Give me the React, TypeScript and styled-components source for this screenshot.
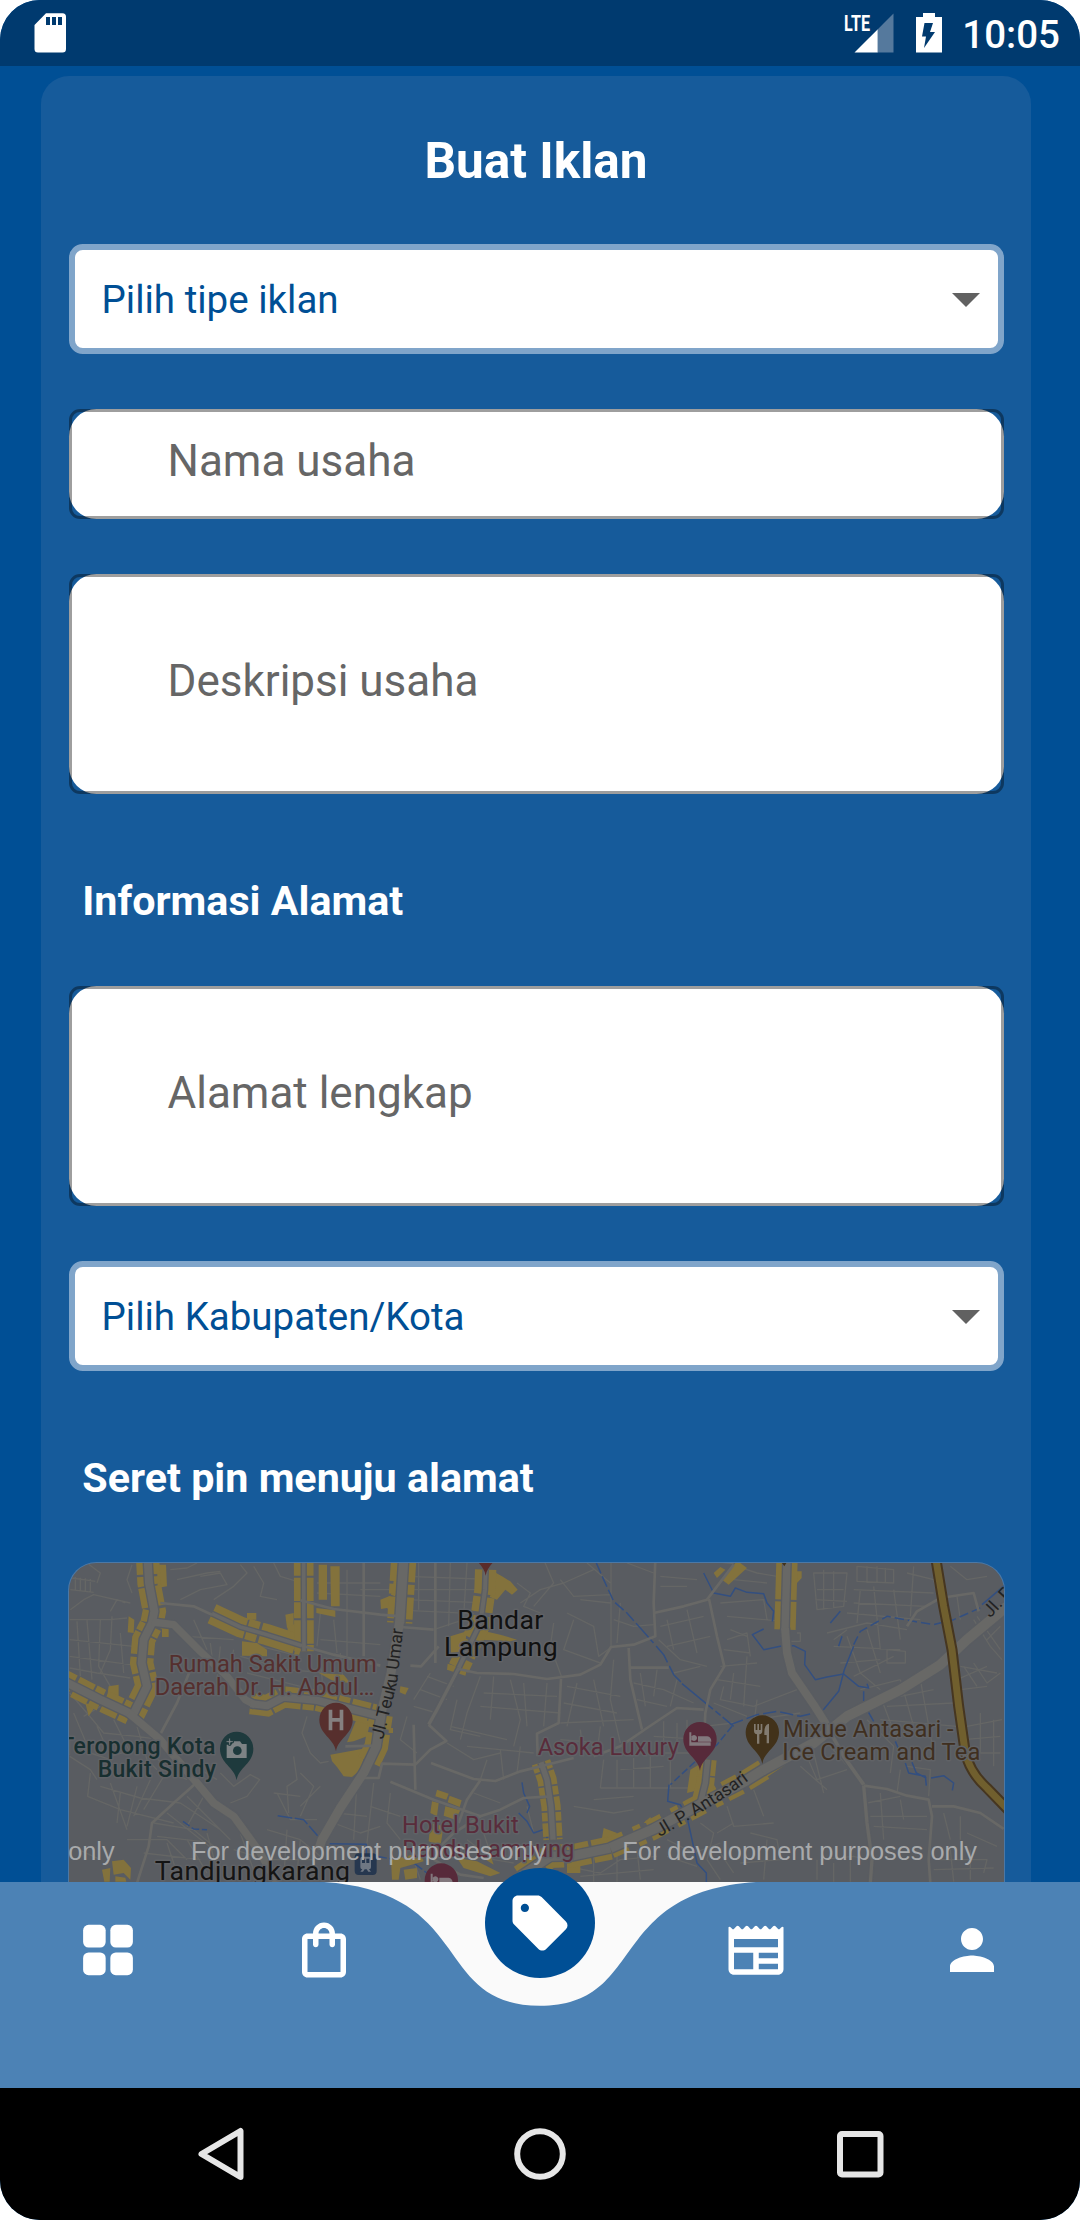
import React from 'react';
import styled, { createGlobalStyle } from 'styled-components';

const GlobalStyle = createGlobalStyle`
  *, *::before, *::after { box-sizing: border-box; }
  html, body { margin: 0; padding: 0; background: #fff; }
  body { font-family: Roboto, "Noto Sans", sans-serif; }
  svg { display: block; }
`;

const Phone = styled.div`
  display: flex;
  flex-direction: column;
  width: 1080px;
  height: 2220px;
  overflow: hidden;
  border-radius: 40px;
  background: #004f95;
`;

const StatusBar = styled.header`
  display: flex;
  flex: none;
  align-items: center;
  height: 66px;
  padding: 0 20px 0 34px;
  background: #003a6f;
  color: #fff;
`;

const StatusRight = styled.div`
  display: flex;
  align-items: center;
  margin-left: auto;
`;

const Clock = styled.time`
  margin-left: 19px;
  padding-top: 3px;
  font-size: 38.5px;
  line-height: 44px;
  font-weight: 500;
`;

const Lte = styled.text`
  font: 700 22px Roboto, sans-serif;
  fill: #fff;
`;

const Content = styled.main`
  flex: 1;
  min-height: 0;
  overflow: hidden;
  padding: 10px 49px 0 41px;
`;

const Card = styled.section`
  display: flex;
  flex-direction: column;
  padding: 0 27.5px;
  border-radius: 28px;
  background: #165b9b;
`;

const Title = styled.h1`
  margin: 0;
  height: 168px;
  line-height: 170px;
  text-align: center;
  font-size: 49.5px;
  font-weight: 700;
  color: #fff;
`;

const Fields = styled.div`
  display: flex;
  flex-direction: column;
  gap: 55px;
`;

const SelectBox = styled.div`
  display: flex;
  align-items: center;
  justify-content: space-between;
  height: 110px;
  padding: 0 18px 0 27px;
  border: 6px solid #80a5ca;
  border-radius: 13.75px;
  background: #fff;
  font-size: 38.5px;
  color: #004f95;
`;

const Caret = styled.span`
  margin-top: 2px;
  border: 14px solid transparent;
  border-top-color: #616161;
  border-bottom: 0;
`;

const TextField = styled.div<{ $tall?: boolean }>`
  position: relative;
  display: flex;
  align-items: center;
  height: ${(p) => (p.$tall ? 220 : 110)}px;
  padding: 0 99px 7px;
  border-radius: 27.5px;
  background: #fff;
  font-size: 44px;
  color: #666;

  &::after {
    content: '';
    position: absolute;
    inset: 0;
    border: 3px solid rgba(0, 0, 0, 0.38);
    border-radius: 11px;
  }
`;

const Heading = styled.h2`
  margin: 0;
  height: 192px;
  padding: 22px 13.75px 0;
  line-height: 171px;
  font-size: 41.25px;
  font-weight: 700;
  color: #fff;
`;

const MapFrame = styled.div`
  height: 420px;
  overflow: hidden;
  border-radius: 27.5px 27.5px 0 0;
  background: #595c61;
  box-shadow: 0 0 0 1px #4b78a6;
`;

const BottomBar = styled.nav`
  position: relative;
  flex: none;
  display: grid;
  grid-template-columns: repeat(5, 1fr);
  justify-items: center;
  height: 206px;
  padding-top: 35px;
  background: #4c82b5;
`;

const Notch = styled.svg`
  position: absolute;
  left: 0;
  top: 0;
`;

const NavIcon = styled.svg`
  width: 66px;
  height: 66px;
  fill: #fff;
`;

const ActiveTab = styled.div`
  position: absolute;
  left: 485px;
  top: -14px;
  display: flex;
  align-items: center;
  justify-content: center;
  width: 110px;
  height: 110px;
  border-radius: 50%;
  background: #004f95;
`;

const SystemBar = styled.footer`
  flex: none;
  display: flex;
  align-items: center;
  justify-content: center;
  gap: 254px;
  height: 132px;
  background: #000;
`;

const SystemIcon = styled.svg`
  width: 66px;
  height: 66px;
  fill: none;
  stroke: #e6e6e6;
  stroke-width: 6;
  stroke-linejoin: round;
`;

const Blocks = styled.path`
  fill: none;
  stroke: #83723c;
`;

const Casing = styled.path`
  fill: none;
  stroke: #595c61;
  stroke-linejoin: round;
`;

const Road = styled.path`
  fill: none;
  stroke: #686866;
  stroke-linejoin: round;
`;

const Lane = styled.path`
  fill: none;
  stroke: #656665;
  stroke-width: 4;
  stroke-linejoin: round;
`;

const River = styled.path`
  fill: none;
  stroke: #334f80;
  stroke-width: 4.5;
  stroke-linejoin: round;
`;

const MapLabel = styled.text<{ $size?: number; $weight?: number }>`
  font-family: Roboto, sans-serif;
  font-size: ${(p) => p.$size ?? 71}px;
  font-weight: ${(p) => p.$weight ?? 400};
  paint-order: stroke;
  stroke: #606266;
  stroke-width: 9px;
  stroke-linejoin: round;
`;

const StreetLabel = styled.text`
  font-family: Roboto, sans-serif;
  font-size: 53px;
  fill: #222;
`;

const Watermark = styled.text`
  font-family: "Liberation Sans", Arial, sans-serif;
  font-size: 76px;
  fill: #a8aaac;
`;

const Yellow = styled.path`
  fill: #83723c;
`;

type Avenue = { d: string; w: number; side?: number; dash?: string };

const avenues: Avenue[] = [
  { d: 'M442 60 L446 130 L462 215 L455 250 L430 300 L424 370 L440 440 L398 525', w: 24, side: 38, dash: '44 7 26 5 60 9' },
  { d: 'M190 424 L300 480 L390 522', w: 24, side: 36, dash: '30 9 52 6' },
  { d: 'M385 520 L480 600 L590 730 L640 790 L700 830 L780 940 L830 1030', w: 23 },
  { d: 'M455 247 L520 255 L600 335 L680 410 L735 480 L765 496', w: 22 },
  { d: 'M750 492 L800 498 L850 472 L950 482 L1140 530', w: 22, side: 34, dash: '56 6 34 8' },
  { d: 'M635 222 L720 262 L800 285 L905 318', w: 11, side: 44, dash: '110 5 34 8' },
  { d: 'M910 60 L911 335', w: 11, side: 40, dash: '48 6 70 4' },
  { d: 'M1210 60 L1198 250', w: 28, side: 40, dash: '66 8 30 8' },
  { d: 'M1198 245 L1172 400 L1140 530', w: 27 },
  { d: 'M1142 526 L1128 620 L1090 700', w: 27, side: 36, dash: '40 16 90 40' },
  { d: 'M1092 696 L1020 805 L965 900 L955 930', w: 27 },
  { d: 'M1456 90 L1454 150 L1440 250 L1375 385', w: 12, side: 44, dash: '74 8 46 12' },
  { d: 'M1375 385 L1310 510 L1285 555', w: 10 },
  { d: 'M1622 668 L1640 720 L1652 800 L1658 900', w: 16, side: 34, dash: '26 6 40 5' },
  { d: 'M1560 1010 L1650 950 L1720 948 L1830 925', w: 28, side: 34, dash: '70 9' },
  { d: 'M1830 925 L1960 868 L2080 805 L2240 722', w: 30, side: 26, dash: '50 34 24 20' },
  { d: 'M2235 724 L2290 690', w: 30, side: 26, dash: '100 4' },
  { d: 'M2285 693 L2440 610 L2540 530 L2700 450 L2820 375 L2900 300 L2990 225 L3020 200', w: 30 },
  { d: 'M2360 60 L2354 270', w: 22, side: 34, dash: '120 6' },
  { d: 'M2354 265 L2360 340 L2375 400 L2440 495 L2478 555', w: 24 },
  { d: 'M2478 555 L2530 650 L2590 735', w: 11 },
  { d: 'M2590 738 L2600 850 L2615 960 L2610 1030', w: 10 },
  { d: 'M2100 790 L2115 730 L2122 660', w: 16, side: 30, dash: '80 5' },
];

const middles = [
  'M1140 530 L1110 520', 'M1200 262 L1300 270', 'M1230 378 L1262 380 L1315 320',
  'M1375 388 L1430 400 L1540 403 L1640 418 L1740 405 L1800 375 L1832 322 L1900 315 L1965 290 L1960 190 L1965 60',
  'M1960 220 L2050 200 L2120 180 L2200 75', 'M2126 178 L2150 290 L2172 380 L2130 450 L2115 520 L2110 630',
  'M1682 418 L1675 550 L1610 582 L1612 650', 'M1885 325 L1890 420 L1925 570',
  'M1888 384 L2005 384', 'M1780 650 L1860 620 L1940 565 L2030 505 L2110 510',
  'M1080 715 L1135 715 L1145 672 L1245 675 L1290 630 L1338 604 L1285 555', 'M1292 670 L1420 718 L1485 724 L1560 695 L1720 655',
  'M1170 726 L1300 780 L1440 830 L1500 810 L1570 775 L1650 770', 'M1440 722 L1400 780 L1375 850',
  'M480 190 L580 200 L635 225', 'M900 182 L1000 208 L1140 225 L1200 230', 'M905 318 L1000 345 L1140 378',
  'M570 390 L530 490 L482 580', 'M590 728 L520 790 L455 850 L445 920 L410 1030',
  'M1035 620 L1130 618', 'M1240 555 L1245 750', 'M2590 738 L2660 748 L2720 768 L2785 780 L2795 830 L2785 960 L2790 1030',
  'M2795 800 L2860 800 L2940 820 L3010 868', 'M2720 260 L2750 215 L2820 175 L2920 160 L2935 215',
  'M1090 60 L1090 350', 'M1305 60 L1305 370', 'M1440 830 L1360 880 L1280 960', 'M1300 960 L1380 1005 L1450 1015', 'M2110 60 L2200 70',
];

const lanes = [
  // west
  'M215 115 L285 125 M210 150 L280 158 M225 112 V152 M240 114 V155 M255 116 V157 M270 118 V158 M210 210 L250 180 L280 165 L390 190 M260 70 L300 100 L290 130 M330 215 L350 180 L375 190 M208 240 H330 L380 235 M230 245 L240 410 M260 242 L275 420 M300 240 L295 380 L330 440 M335 230 L330 330 L300 400 M208 300 L400 320 M208 350 L390 375 M208 385 L290 400 L390 415 M360 280 L370 400 M395 160 L380 120 L395 75 M510 90 L560 85 L590 70 M530 120 L620 100 L660 95 M540 180 L600 150 L680 135 L660 100 L600 110 M720 75 L740 100 L700 140 L640 180 M760 80 L790 130 L780 170 L830 180 M820 70 L840 110 L890 125 M560 290 L700 300 M580 240 L620 330 M630 310 L640 390 M660 320 L650 420 M700 330 L690 380',
  'M208 460 L260 520 L310 580 L410 590 L480 600 M220 520 L270 640 L330 660 M250 530 L300 500 M290 560 L330 650 L430 620 M340 540 L390 640 M410 560 L440 660 L470 690 M450 640 L520 700 L560 720 M208 650 L270 690 L290 720 M270 700 L262 770 L360 810 L520 850 M300 740 L420 775 L540 790 M330 730 L380 870 M360 760 L350 850 M410 740 L380 860 M450 720 L400 830 M490 710 L430 810 M460 850 L580 870 L640 920 M470 890 L600 905 M500 820 L640 930 M540 790 L660 870 M560 770 L690 900 M610 770 L560 860 M660 700 L700 740 L750 705 L778 720 L740 770 L690 790 M600 690 L650 720 M235 930 L300 960 M380 900 L500 900 L560 960 M430 940 L600 960 M620 880 L660 1026 M500 910 L530 1000 M560 900 L620 1000',
  'M780 320 L900 350 M720 350 L860 390 L980 400 M740 400 L900 440 M960 350 L970 480 M1020 340 L1035 500 M950 130 H1140 M950 160 L1140 170 M960 220 L950 320 M1000 240 L1010 340 M1040 90 V350 M960 300 L1140 315 M920 530 L905 580 L930 640 L960 670 L985 665 M880 650 L890 720 L860 740 L865 820 M830 760 L870 840 L950 840 M900 700 L940 740 L900 830 M960 740 L900 800 M800 870 L900 900 L960 950 M700 930 L800 960 L940 960 M720 880 L770 1020 M860 870 L850 1020 M900 900 L890 1000 M820 760 L900 770 M1000 850 L1080 880 L1140 860 M1010 820 L1100 830 M1070 720 L1060 900 M1120 730 L1090 1000',
  // centre
  'M1080 150 H1440 M1220 110 L1440 118 M1220 180 L1420 188 M1218 212 L1420 222 M1255 70 V210 M1350 70 L1345 260 M1400 70 L1390 230 M1300 270 L1420 230 M1280 410 L1360 440 M1260 450 L1340 480 M1240 500 L1310 520 M1290 400 L1240 480 M1220 530 L1200 600 L1250 640 M1370 480 L1350 570 L1440 590 M1440 410 L1400 520 L1380 600 M1480 410 L1470 540 M1530 420 L1560 540 L1540 620 M1450 460 L1670 470 M1440 500 L1680 520 M1350 560 L1520 600 M1400 620 L1600 640 M1340 610 L1420 660 L1500 640 M1570 430 L1580 560 M1640 430 L1630 560 M1550 130 L1590 160 L1570 200 L1620 220 M1560 190 L1620 150 L1690 130 L1780 90 M1630 60 L1660 130 L1600 200 M1680 120 L1720 170 L1830 165 M1700 220 L1780 260 L1795 350 L1830 325 M1660 250 L1650 320 L1685 415 M1720 240 L1690 330 L1800 370 M1740 180 L1830 190 M1832 60 V320 M1860 190 L1850 310 M1760 70 L1830 130 M1880 70 L1960 100 M1840 240 L1900 260 L1960 255 M1980 260 L2110 230 M2000 320 L2130 290 M1975 300 L2040 360 L2120 380 M2000 240 L2020 330 M2060 210 L2090 340 M2020 400 L2100 380 M1980 140 H2060 M1980 110 L2090 120',
  'M1700 440 L1860 470 M1690 490 L1850 520 M1680 550 L1900 540 M1730 430 L1700 560 M1780 420 L1810 560 M1840 360 L1830 480 L1860 610 M1740 570 L1750 650 M1800 560 L1790 640 M1680 600 L1800 610 M1900 430 L1990 450 L2080 490 M1910 480 L2000 500 M1920 400 L1935 500 M1970 390 L1960 470 M2030 420 L2010 500 M1990 545 L1990 650 M2030 550 V640 M2060 540 V620 M1960 590 L2110 600 M1940 640 H2090 M1800 745 H2080 M1810 660 L1800 745 M1850 660 V745 M1900 655 V745 M1950 650 V745 M2010 660 V745 M1860 690 L1990 680 M1780 780 L1900 770 M1720 800 L1840 820 L1900 810 M1460 660 L1440 720 M1500 630 L1510 720 M1560 620 L1550 700 M1420 760 L1500 790 M1170 760 L1160 850 L1200 900 M1110 800 L1200 830 M1580 800 L1600 880 M1240 960 L1260 1020 M1400 900 L1480 960 L1540 970 M1440 850 L1470 940 M1700 980 L1800 1000 L1860 960 L1970 950 M1740 1010 L1960 990 M1780 950 V1026 M1850 940 V1026 M1910 930 L1920 1020 M2000 900 L2080 940 L2160 910 M2000 950 L2090 980',
  // east
  'M2210 80 L2270 100 L2330 110 M2200 120 L2300 130 M2160 190 L2290 180 L2300 240 M2180 230 L2350 245 M2190 270 L2240 290 M2170 330 L2250 340 M2180 300 L2240 280 L2250 350 M2160 380 L2270 370 M2150 420 L2280 440 M2170 440 L2160 480 L2260 500 M2140 490 L2240 530 M2200 400 L2190 480 M2240 350 L2230 500 M2390 280 H2400 V305 H2360 M2260 500 L2390 450 M2260 540 L2400 520 M2270 480 L2260 560 M2110 560 L2200 550 M2440 100 H2540 L2530 200 L2450 210 Z M2450 150 H2530 M2445 180 L2540 185 M2470 90 V210 M2500 95 V205 M2570 80 L2680 90 V130 L2570 125 Z M2600 80 V130 M2630 80 V130 M2655 85 V130 M2560 150 L2800 160 M2560 190 L2780 200 M2540 220 L2760 240 M2580 150 L2570 250 M2620 140 L2640 330 M2680 150 L2700 300 M2740 80 L2730 230 M2720 100 L2800 120 L2810 160 M2850 80 L2900 120 L2960 110 M2870 170 L2880 240 M2480 280 L2600 250 L2720 270 M2500 320 L2700 330 M2520 370 L2640 360 M2540 290 L2580 400 L2640 450 M2600 270 L2640 400 M2560 410 L2680 350 M2660 330 V370 H2715 V335 Z M2580 450 L2700 420 M2500 300 L2540 270',
  'M2920 240 L2970 320 L3005 360 M2940 270 L2980 230 M2960 300 L3000 260 M2930 230 L3000 330 M2890 380 L2930 440 M2920 370 L2960 430 L3000 400 M2870 420 L2960 380 M2880 380 L2990 400 M2880 450 L2960 440 M2700 470 L2800 450 M2660 500 L2860 490 M2640 540 L2870 560 M2700 420 L2740 560 M2760 420 L2800 640 M2600 540 L2680 620 L2670 700 M2640 470 L2690 600 M2900 560 L3005 540 M2890 600 L3000 590 M2900 640 H3000 M2940 520 V640 M2980 540 V680 M2490 620 L2560 700 M2420 650 L2450 720 L2540 690 M2400 680 L2480 750 M2440 640 L2470 760 M2700 690 L2690 760 M2720 680 L2790 690 L2785 770 M2600 790 L2700 770 M2610 830 L2780 830 M2640 760 L2650 900 M2700 780 L2710 840 M2100 850 L2140 880 L2120 960 L2160 1020 M2180 800 L2200 860 L2320 850 M2260 750 L2290 830 M2150 880 L2200 850 M2250 880 L2330 900 L2340 960 L2220 970 M2300 900 L2290 1020 M2160 940 L2200 1000 M2450 960 V1020 M2460 960 L2560 950 L2600 960 M2500 970 V1026 M2550 960 V1026 M2620 860 L2780 870 M2830 820 L2850 900 M2880 830 V900 M2900 880 L2990 920 M2820 960 H2960 L2950 1000 M2850 930 L2860 1026 M2910 930 V1020 M2800 990 L2980 985',
];

const rivers = [
  { d: 'M1788 70 L1810 120 L1840 185 L1880 220 L1920 265', dash: '34 10' },
  { d: 'M1920 265 L1990 345 L2020 405 L2050 435', dash: '60 12' },
  { d: 'M2045 432 L2140 510 L2200 560', dash: '120 10 20 8' },
  { d: 'M2195 560 L2150 615 L2080 670 L2010 735', dash: '22 9' },
  { d: 'M2006 735 L2002 785 L2040 795 L2062 840 L2075 900 L2090 970 L2118 1000 L2118 1030' },
  { d: 'M2190 555 L2270 525 L2330 515 L2400 530 L2465 515', dash: '40 12' },
  { d: 'M2468 512 L2515 455 L2532 390 L2560 320', dash: '' },
  { d: 'M2560 315 L2580 275 L2660 230 L2740 245 L2800 255 L2860 240 L2950 200', dash: '28 12' },
  { d: 'M2110 100 L2140 160 L2190 170 L2205 145 L2240 158 L2290 162 L2300 190 L2320 215 L2316 245' },
  { d: 'M2290 268 L2256 285 L2290 330 L2340 320 L2380 318 L2415 335 L2413 375 L2445 420 L2480 412 L2530 403 L2575 440 L2605 445 L2600 432' },
  { d: 'M2490 250 L2520 215 M2515 320 L2525 290 M2590 455 L2590 485 M2600 510 L2620 545 M2685 605 L2700 640' },
  { d: 'M2715 670 L2725 700 L2775 710 L2778 738 M2735 668 L2748 700 L2778 715 M2792 715 L2830 708 L2860 730 L2856 752' },
  { d: 'M2945 195 L3012 138' },
  { d: 'M832 828 L910 840 L955 892', dash: '44 8' },
  { d: 'M988 912 L1098 914 L1098 950' },
  { d: 'M548 845 L580 868 L620 870', dash: '24 8' },
  { d: 'M1565 728 L1570 760 L1588 800 L1580 820 M1555 820 L1580 845 L1600 880 L1640 866 L1640 900' },
  { d: 'M1130 950 L1240 970 L1280 1000', dash: '30 8' },
];

const yellowPatches = [
  'M990 645 L1100 625 L1080 690 L1055 712 L1030 710 L1010 682 L995 665 Z',
  'M1070 535 L1110 545 L1100 590 L1060 605 L1040 608 Z',
  'M860 250 L900 258 L902 305 L865 300 Z',
  'M740 220 H768 V240 H740 Z M855 225 L880 220 L880 255 L860 265 Z',
  'M725 305 L770 310 L800 330 L800 350 L725 348 Z',
  'M955 75 H980 V180 H955 Z M990 80 H1018 V200 H992 Z M948 205 L1005 212 V232 L948 220 Z',
  'M325 440 L355 435 V480 L320 475 Z M255 490 L285 500 L265 530 Z',
  'M470 75 H497 L500 140 L472 145 Z M485 265 H505 V292 H485 Z M385 230 L402 240 L400 280 L382 278 Z',
  'M335 965 L370 960 L392 985 L390 1020 L370 1000 L340 1005 Z M305 990 L330 985 L328 1026 H312 Z M345 1010 L375 1014 L378 1026 H345 Z',
  'M955 400 L1030 405 L1050 430 L1000 425 Z',
  'M1140 180 L1170 168 L1182 205 L1178 222 L1160 205 L1142 208 Z M1186 95 L1192 78 L1200 140 L1184 170 L1172 165 Z',
  'M1470 90 L1505 110 L1530 125 L1552 150 L1535 165 L1515 150 L1490 180 L1468 172 L1480 140 Z',
  'M1350 290 L1400 275 L1390 335 L1352 340 Z M1435 270 L1500 285 L1550 300 L1530 305 L1440 300 Z',
  'M1342 372 L1400 390 L1395 408 L1340 390 Z M1200 440 L1225 445 L1215 465 L1198 458 Z M1165 565 H1178 V580 H1165 Z',
  'M1310 750 L1345 762 L1338 780 L1305 770 Z M1348 768 L1384 782 L1378 802 L1342 788 Z M1295 785 L1315 790 L1310 830 L1290 820 Z M1335 800 L1380 812 L1365 840 L1330 828 Z M1290 850 L1330 860 L1320 920 L1285 905 Z',
  'M1172 960 L1260 940 L1270 965 L1200 985 L1195 1020 H1175 Z M1210 990 L1250 985 V1015 L1215 1020 Z M1370 955 L1430 965 L1500 1000 L1470 1010 L1390 985 Z M1440 950 L1470 945 L1480 975 Z',
  'M1810 865 L1850 880 L1840 905 L1805 895 Z M1700 965 L1740 960 V1000 H1700 Z M1930 850 L1950 832 L1955 850 Z',
  'M2165 120 L2205 70 H2220 L2240 85 L2185 135 Z M2140 100 L2160 82 L2175 90 L2150 115 Z',
  'M2070 690 L2120 660 V745 L2060 760 Z M2380 95 H2404 V115 L2390 130 H2380 Z',
  'M2275 715 L2350 668 L2358 674 L2285 722 Z',
];

const highway = 'M2807 60 L2830 200 L2855 330 L2875 500 L2895 640 Q2910 700 2960 745 L3025 812';

const pinPath = 'M0 95 C-6 55 -50 45 -50 0 A50 51 0 1 1 50 0 C50 45 6 55 0 95 Z';

const Pin: React.FC<{ x: number; y: number; color: string; children?: React.ReactNode }> = ({ x, y, color, children }) => (
  <g transform={`translate(${x} ${y})`}>
    <path d={pinPath} fill={color} />
    {children}
  </g>
);

const bed = 'M-32 -20 H-26 V10 H32 V20 H-32 Z M-18 -12 a9 9 0 1 0 .1 0 Z M-6 -8 H22 Q34 -6 34 8 H-6 Z';

const CityMap: React.FC = () => (
  <svg width="935" height="319" viewBox="206 70 2805 957" preserveAspectRatio="none">
    {lanes.map((d) => <Lane key={d} d={d} />)}
    {rivers.map((r) => <River key={r.d} d={r.d} strokeDasharray={r.dash || undefined} />)}
    {yellowPatches.map((d) => <Yellow key={d} d={d} />)}
    {avenues.filter((a) => a.side).map((a) => (
      <Blocks key={a.d} d={a.d} strokeWidth={a.w + (a.side ?? 0) + 8} strokeDasharray={a.dash} />
    ))}
    {avenues.map((a) => <Casing key={a.d} d={a.d} strokeWidth={a.w + 8} />)}
    {middles.map((d) => <Road key={d} d={d} strokeWidth={8} />)}
    {avenues.map((a) => <Road key={a.d} d={a.d} strokeWidth={a.w} />)}
    <path d={highway} fill="none" stroke="#463620" strokeWidth="33" />
    <path d={highway} fill="none" stroke="#705f2e" strokeWidth="21" />

    <MapLabel x="505" y="396" textLength="624" fill="#552f2e">Rumah Sakit Umum</MapLabel>
    <MapLabel x="463" y="467" textLength="659" fill="#552f2e">Daerah Dr. H. Abdul…</MapLabel>
    <MapLabel x="180" y="642" textLength="465" $weight={500} $size={69} fill="#182f30">Teropong Kota</MapLabel>
    <MapLabel x="292" y="713" textLength="355" $weight={500} $size={69} fill="#182f30">Bukit Sindy</MapLabel>
    <MapLabel x="463" y="1022" textLength="586" $size={80} fill="#141414">Tandjungkarang</MapLabel>
    <MapLabel x="1371" y="268" textLength="258" $size={80} fill="#111">Bandar</MapLabel>
    <MapLabel x="1331" y="350" textLength="341" $size={80} fill="#111">Lampung</MapLabel>
    <MapLabel x="1612" y="647" textLength="424" fill="#592c3b">Asoka Luxury</MapLabel>
    <MapLabel x="1205" y="880" textLength="350" fill="#592c3b">Hotel Bukit</MapLabel>
    <MapLabel x="1206" y="951" textLength="516" fill="#592c3b">Randu Lampung</MapLabel>
    <MapLabel x="2348" y="592" textLength="512" fill="#3f2f20">Mixue Antasari -</MapLabel>
    <MapLabel x="2346" y="662" textLength="594" fill="#3f2f20">Ice Cream and Tea</MapLabel>

    <path id="umar" d="M1148 600 L1190 430 L1211 250" fill="none" />
    <path id="antasari" d="M1978 892 L2090 826 L2180 770 L2270 704" fill="none" />
    <StreetLabel><textPath href="#umar" textLength="338">Jl. Teuku Umar</textPath></StreetLabel>
    <StreetLabel><textPath href="#antasari" textLength="318">Jl. P. Antasari</textPath></StreetLabel>
    <StreetLabel transform="translate(2970 236) rotate(-47)">Jl. P. Antasari</StreetLabel>

    <Pin x={709} y={627} color="#1e3a3d">
      <path d="M-30 -12 H-16 L-8 -22 H10 L16 -14 H30 V28 H-30 Z" fill="#7d8385" />
      <circle cx="2" cy="6" r="13" fill="#1e3a3d" />
      <path d="M-32 -24 h8 v-8 h6 v8 h8 v6 h-8 v8 h-6 v-8 h-8 Z" fill="#7d8385" stroke="#1e3a3d" strokeWidth="3" />
    </Pin>
    <Pin x={1007} y={540} color="#572f2d">
      <path d="M-22 -30 h11 v25 h22 v-25 h11 v62 h-11 v-26 h-22 v26 h-11 Z" fill="#858080" />
    </Pin>
    <Pin x={2099} y={598} color="#572a3a"><path d={bed} fill="#82787d" /></Pin>
    <Pin x={1323} y={1022} color="#572a3a"><path d={bed} fill="#82787d" /></Pin>
    <Pin x={2286} y={578} color="#42321a">
      <path d="M-25 -25 v20 q0 10 9 11 v28 h7 v-28 q9 -1 9 -11 v-20 h-5 v18 h-5 v-18 h-5 v18 h-5 v-18 Z M20 -26 q-14 2 -14 26 v8 h7 v25 h7 Z" fill="#827b70" />
    </Pin>
    <Pin x={1456} y={13} color="#5b2c2a" />
    <path d="M2345 70 H2358 L2352 80 Z" fill="#42321a" />
    <rect x="1063" y="941" width="66" height="65" rx="12" fill="#26374f" />
    <path d="M1080 957 q0 -6 6 -6 h20 q6 0 6 6 v26 q0 6 -6 6 l6 7 h-8 l-5 -7 h-6 l-5 7 h-8 l6 -7 q-6 0 -6 -6 Z M1085 957 v13 h9 v-13 Z M1098 957 v13 h9 v-13 Z" fill="#6f7783" fillRule="evenodd" />

    <Watermark x="-723" y="962" textLength="1066">For development purposes only</Watermark>
    <Watermark x="572" y="962" textLength="1065">For development purposes only</Watermark>
    <Watermark x="1866" y="962" textLength="1064">For development purposes only</Watermark>
  </svg>
);

const StatusIcons: React.FC = () => (
  <svg width="100" height="66" viewBox="842 0 100 66">
    <Lte x="843" y="31" textLength="26" lengthAdjust="spacingAndGlyphs">LTE</Lte>
    <path d="M853.5 52.5 L876.8 29.2 V52.5 Z" fill="#fff" />
    <path d="M876.8 29.2 L892.5 13.5 V52.5 H876.8 Z" fill="#55799d" />
    <path fillRule="evenodd" fill="#fff" d="M922 13 h12 v4 h7 v35.5 h-26 V17 h7 Z M923.5 23 l-2.5 13.5 h4 l-2 11.5 l11 -16 h-5 l3 -9 Z" />
  </svg>
);

const App: React.FC = () => (
  <>
    <GlobalStyle />
    <Phone>
      <StatusBar>
        <svg width="32" height="66" viewBox="34 0 32 66">
          <path fillRule="evenodd" fill="#fff" d="M46 13.3 H62.5 q3.5 0 3.5 3.5 V49 q0 3.5 -3.5 3.5 H38 q-3.5 0 -3.5 -3.5 V25 Z M46 17 v8 h4 v-8 Z M52 17 v8 h4 v-8 Z M58 17 v8 h4 v-8 Z" />
        </svg>
        <StatusRight>
          <StatusIcons />
          <Clock>10:05</Clock>
        </StatusRight>
      </StatusBar>

      <Content>
        <Card>
          <Title>Buat Iklan</Title>
          <Fields>
            <SelectBox>Pilih tipe iklan<Caret /></SelectBox>
            <TextField>Nama usaha</TextField>
            <TextField $tall>Deskripsi usaha</TextField>
          </Fields>
          <Heading>Informasi Alamat</Heading>
          <Fields>
            <TextField $tall>Alamat lengkap</TextField>
            <SelectBox>Pilih Kabupaten/Kota<Caret /></SelectBox>
          </Fields>
          <Heading>Seret pin menuju alamat</Heading>
          <MapFrame><CityMap /></MapFrame>
        </Card>
      </Content>

      <BottomBar>
        <Notch width="1080" height="124" viewBox="0 0 1080 124">
          <path fill="#fafafa" d="M324 0 C475.2 10.3 432 123.75 540 123.75 C648 123.75 604.8 10.3 756 0 Z" />
        </Notch>
        <NavIcon viewBox="0 0 24 24">
          <rect x="2.95" y="2.85" width="8.2" height="8.25" rx="2" />
          <rect x="12.85" y="2.85" width="8.2" height="8.25" rx="2" />
          <rect x="2.95" y="12.9" width="8.2" height="8.25" rx="2" />
          <rect x="12.85" y="12.9" width="8.2" height="8.25" rx="2" />
        </NavIcon>
        <NavIcon viewBox="0 0 24 24">
          <path d="M18 6h-2c0-2.210-1.790-4-4-4S8 3.790 8 6H6c-1.100 0-2 .9-2 2v12c0 1.100.9 2 2 2h12c1.100 0 2-.9 2-2V8c0-1.100-.9-2-2-2zm-6-2c1.100 0 2 .9 2 2h-4c0-1.100.9-2 2-2zm6 16H6V8h2v2c0 .55.45 1 1 1s1-.45 1-1V8h4v2c0 .55.45 1 1 1s1-.45 1-1V8h2v12z" />
        </NavIcon>
        <span />
        <NavIcon viewBox="0 0 24 24">
          <path fillRule="evenodd" d="M21.150 3.850 L20.700 4.300 Q20.330 4.670 19.960 4.300 L19.100 3.400 Q18.670 3 18.240 3.400 L17.400 4.300 Q17 4.670 16.600 4.300 L15.760 3.400 Q15.330 3 14.900 3.400 L14.070 4.300 Q13.670 4.670 13.270 4.300 L12.430 3.400 Q12 3 11.570 3.400 L10.730 4.300 Q10.330 4.670 9.930 4.300 L9.100 3.400 Q8.670 3 8.240 3.400 L7.400 4.300 Q7 4.670 6.600 4.300 L5.760 3.400 Q5.330 3 4.900 3.400 L4.040 4.300 Q3.670 4.670 3.300 4.300 L2.850 3.850 Q2.400 3.400 2 3.700 V19 c0 1.100.9 2 2 2 h16 c1.100 0 2-.9 2-2 V3.700 Q21.600 3.400 21.150 3.850 Z M4 8 H20 V11 H4 Z M4 13 H11 V19 H4 Z M13 13 H20 V15 H13 Z M13 17 H20 V19 H13 Z" />
        </NavIcon>
        <NavIcon viewBox="0 0 24 24">
          <path d="M12 12c2.210 0 4-1.790 4-4s-1.790-4-4-4-4 1.790-4 4 1.790 4 4 4zm0 2c-2.670 0-8 1.340-8 4v2h16v-2c0-2.660-5.330-4-8-4z" />
        </NavIcon>
        <ActiveTab>
          <NavIcon viewBox="0 0 24 24">
            <path d="m21.410 11.410-8.830-8.830c-.37-.37-.88-.58-1.410-.58H4c-1.100 0-2 .9-2 2v7.170c0 .53.21 1.040.59 1.410l8.830 8.830c.78.78 2.050.78 2.830 0l7.170-7.170c.78-.78.78-2.040-.01-2.830zM6.500 8C5.670 8 5 7.330 5 6.500S5.670 5 6.500 5 8 5.670 8 6.500 7.330 8 6.500 8z" />
          </NavIcon>
        </ActiveTab>
      </BottomBar>

      <SystemBar>
        <SystemIcon viewBox="0 0 66 66"><path d="M53.5 10 V56 L14.5 33 Z" /></SystemIcon>
        <SystemIcon viewBox="0 0 66 66"><circle cx="33" cy="33" r="22.8" /></SystemIcon>
        <SystemIcon viewBox="0 0 66 66"><rect x="13" y="13" width="40.5" height="40.5" rx="2" /></SystemIcon>
      </SystemBar>
    </Phone>
  </>
);

export default App;
